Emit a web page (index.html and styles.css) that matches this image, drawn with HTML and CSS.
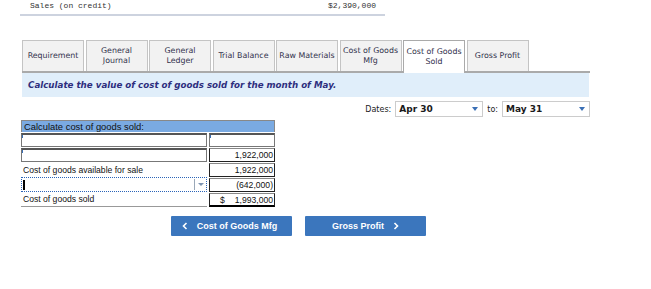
FILE: index.html
```html
<!DOCTYPE html>
<html lang="en">
<head>
    <meta charset="UTF-8">
    <title>Cost of Goods Sold</title>
    <link rel="stylesheet" href="styles.css">
</head>
<body>
<div class="sales">
    <span class="sales-label">Sales (on credit)</span>
    <span class="sales-amount">$2,390,000</span>
</div>

<div class="tabs">
    <div class="tab">Requirement</div>
    <div class="tab">General<br>Journal</div>
    <div class="tab">General<br>Ledger</div>
    <div class="tab">Trial Balance</div>
    <div class="tab">Raw Materials</div>
    <div class="tab">Cost of Goods<br>Mfg</div>
    <div class="tab active">Cost of Goods<br>Sold</div>
    <div class="tab">Gross Profit</div>
</div>

<div class="prompt">Calculate the value of cost of goods sold for the month of May.</div>

<div class="dates">
    <span class="dates-label">Dates:</span>
    <div class="select"><span>Apr 30</span><i class="arrow"></i></div>
    <span class="dates-label">to:</span>
    <div class="select"><span>May 31</span><i class="arrow"></i></div>
</div>

<div class="sheet">
    <div class="sheet-head">Calculate cost of goods sold:</div>

    <div class="cell left"><div class="input"></div></div>
    <div class="cell right"><div class="input"></div></div>

    <div class="cell left"><div class="input"></div></div>
    <div class="cell right"><div class="num">1,922,000</div></div>

    <div class="cell left label">Cost of goods available for sale</div>
    <div class="cell right"><div class="num">1,922,000</div></div>

    <div class="cell left"><div class="dropdown"><span class="caret"></span><span class="drop-btn"><i class="arrow small"></i></span></div></div>
    <div class="cell right"><div class="num">(642,000)</div></div>

    <div class="cell left label last">Cost of goods sold</div>
    <div class="cell right"><div class="num total"><span>$</span><span>1,993,000</span></div></div>
</div>

<div class="nav">
    <div class="btn prev">
        <svg width="6" height="8" viewBox="0 0 6 8"><polyline points="4.5,1 1.5,4 4.5,7" fill="none" stroke="#fff" stroke-width="1.6"/></svg>
        <span>Cost of Goods Mfg</span>
    </div>
    <div class="btn next">
        <span>Gross Profit</span>
        <svg width="6" height="8" viewBox="0 0 6 8"><polyline points="1.5,1 4.5,4 1.5,7" fill="none" stroke="#fff" stroke-width="1.6"/></svg>
    </div>
</div>
</body>
</html>
```

FILE: styles.css
```css
html,
body {
margin: 0;
padding: 0;
background: #fff;
font-family: "DejaVu Sans", Verdana, sans-serif;
}

.sales {
display: flex;
justify-content: space-between;
margin-left: 20px;
padding: 0 9px 0 10px;
box-sizing: border-box;
width: 365px;
height: 16px;
border-bottom: 2px solid #cdd3df;
font-family: "Liberation Mono", monospace;
font-size: 8px;
line-height: 11px;
color: #333;
}

.tabs {
display: flex;
gap: 1.5px;
margin: 24px 0 0 22px;
width: 568px;
height: 31px;
border-bottom: 2px solid #aaa;
}

.tab {
width: 62px;
height: 31px;
box-sizing: border-box;
border: 1px solid #c4c4c4;
border-bottom: none;
background: #f2f2f2;
display: flex;
align-items: center;
justify-content: center;
text-align: center;
font-size: 7.9px;
line-height: 10px;
color: #33334d;
}

.tab.active {
background: #fff;
border: 1px solid #aaa;
border-bottom: none;
height: 33px;
margin-bottom: -2px;
}

.prompt {
margin-left: 22px;
width: 567px;
height: 24px;
background: #e0eefa;
padding-left: 6px;
box-sizing: border-box;
line-height: 24px;
font-size: 8.7px;
font-weight: bold;
font-style: italic;
color: #2e2e7e;
}

.dates {
display: flex;
justify-content: flex-end;
align-items: center;
gap: 4px;
width: 590px;
margin-top: 4px;
height: 16px;
}

.dates-label {
font-size: 8px;
color: #222;
}

.select {
width: 88px;
height: 16px;
box-sizing: border-box;
border: 1px solid #ccc;
display: flex;
align-items: center;
justify-content: space-between;
padding: 0 4px 0 3px;
font-size: 9px;
font-weight: bold;
color: #1a1a1a;
}

.arrow {
width: 0;
height: 0;
border-left: 3.5px solid transparent;
border-right: 3.5px solid transparent;
border-top: 4px solid #3a6fb5;
}

.sheet {
display: grid;
grid-template-columns: 186px 66px;
grid-template-rows: 12px repeat(5, 15px);
column-gap: 2px;
margin: 3px 0 0 21px;
width: 254px;
font-family: "Liberation Sans", Arial, sans-serif;
font-size: 8.6px;
color: #111;
}

.sheet-head {
grid-column: 1 / 3;
background: #7aaae2;
border: 1px solid #888;
border-bottom: none;
padding-left: 2px;
font-size: 9.4px;
line-height: 11px;
}

.cell {
display: flex;
align-items: center;
box-sizing: border-box;
}

.cell.label {
padding-left: 2px;
}

.cell.last {
border-bottom: 1px solid #999;
}

.input {
width: 100%;
height: 14px;
box-sizing: border-box;
border: 1px solid #777;
border-top-width: 2px;
border-top-color: #555;
position: relative;
}

.input::before {
content: "";
position: absolute;
left: 0;
top: 0;
width: 1px;
height: 3px;
background: #3a6fb5;
}

.num {
width: 100%;
height: 14px;
box-sizing: border-box;
border: 1px solid #222;
border-top-color: #888;
text-align: right;
padding-right: 1px;
line-height: 12px;
}

.total {
display: flex;
justify-content: space-between;
padding-left: 10px;
border-bottom: 2px solid #000;
}

.dropdown {
width: 100%;
height: 15px;
box-sizing: border-box;
border: 1px dotted #2b64b8;
display: flex;
align-items: center;
justify-content: space-between;
padding: 0 0 0 1px;
}

.caret {
width: 1.5px;
height: 10px;
background: #000;
}

.drop-btn {
display: flex;
align-items: center;
justify-content: center;
width: 11px;
height: 11px;
border-left: 1px solid #9aa8b8;
}

.arrow.small {
border-left-width: 3px;
border-right-width: 3px;
border-top: 3px solid #7d94b2;
}

.nav {
display: flex;
gap: 13px;
margin: 9px 0 0 171px;
}

.btn {
display: flex;
align-items: center;
justify-content: center;
gap: 9px;
width: 121px;
height: 20px;
background: #3b76bd;
color: #fff;
font-family: "Liberation Sans", Arial, sans-serif;
font-size: 9px;
font-weight: bold;
border-radius: 1px;
}

.btn.prev {
gap: 9px;
padding-right: 4px;
box-sizing: border-box;
}
```
